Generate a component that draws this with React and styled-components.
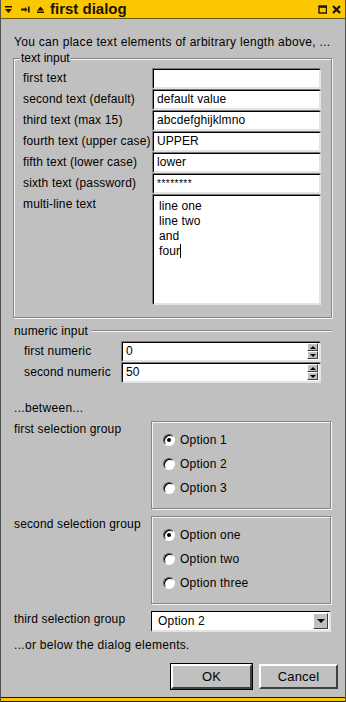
import React from 'react'
import styled, { createGlobalStyle } from 'styled-components'

const GlobalStyle = createGlobalStyle`
  html, body { margin: 0; padding: 0; background: #c0c0c0; }
  body {
    font-family: "Liberation Sans", Arial, sans-serif;
    font-size: 12px;
    color: #000;
  }
`

const Window = styled.div`
  width: 346px;
  height: 702px;
  box-sizing: border-box;
  display: flex;
  flex-direction: column;
  background: #c0c0c0;
  border-left: 1px solid #505050;
  border-right: 1px solid #505050;
  overflow: hidden;
`

const TitleBar = styled.div`
  height: 18px;
  flex: none;
  display: flex;
  align-items: center;
  background: #fbc800;
  border-bottom: 1px solid #6a5a10;
  padding: 0 3px 0 3px;
  color: #1a1400;
`

const TitleIcon = styled.svg`
  width: 9px;
  height: 9px;
  margin-right: ${p => p.$gap || 6}px;
  flex: none;
`

const TitleText = styled.div`
  font-family: "Liberation Sans", Arial, sans-serif;
  font-weight: bold;
  font-size: 15px;
  line-height: 18px;
  flex: 1;
`

const Body = styled.div`
  flex: 1;
  display: flex;
  flex-direction: column;
  padding: 0 13px;
`

const Note = styled.div`
  line-height: 14px;
  margin-top: ${p => p.$top || 0}px;
  letter-spacing: ${p => p.$ls || 0.15}px;
`

const Frame = styled.fieldset`
  margin: 3px 0 0 -1px;
  padding: 4px 10px 12px 9px;
  border: 1px solid #858585;
  box-shadow: inset 1px 1px 0 #f4f4f4, 1px 1px 0 #f4f4f4;
  min-width: 0;
`

const Legend = styled.legend`
  padding: 0 1px;
  margin-left: -3px;
  line-height: 13px;
  background: #c0c0c0;
`

const FieldGrid = styled.div`
  display: grid;
  grid-template-columns: 130px 1fr;
  row-gap: 1px;
`

const Label = styled.div`
  line-height: 14px;
  padding-top: 2px;
  letter-spacing: 0.15px;
  white-space: nowrap;
`

const Field = styled.div`
  position: relative;
  box-sizing: border-box;
  height: ${p => p.$h || 20}px;
  background: #fff;
  border-style: solid;
  border-width: 1px 2px 2px 1px;
  border-color: #000 #e4e4e4 #e4e4e4 #000;
  box-shadow: -1px -1px 0 #7a7a7a;
  padding: ${p => (p.$multi ? '3px 5px' : '0 3px')};
  line-height: ${p => (p.$multi ? '15px' : '17px')};
  font-size: ${p => (p.$small ? '10px' : '12px')};
  letter-spacing: ${p => (p.$small ? '0.5px' : '0.1px')};
  white-space: pre;
`

const Caret = styled.span`
  display: inline-block;
  width: 1px;
  height: 14px;
  background: #000;
  vertical-align: -3px;
`

const SectionHead = styled.div`
  display: flex;
  align-items: center;
  gap: 3px;
  margin-top: 6px;
  line-height: 14px;
  letter-spacing: 0.15px;
  &::after {
    content: "";
    flex: 1;
    height: 1px;
    background: #858585;
    border-bottom: 1px solid #f4f4f4;
  }
`

const NumGrid = styled.div`
  display: grid;
  grid-template-columns: 98px 1fr;
  row-gap: 1px;
  padding: 4px 11px 0 10px;
`

const Spinner = styled.div`
  position: absolute;
  right: 1px;
  top: 0;
  display: flex;
  flex-direction: column;
`

const SpinBtn = styled.div`
  width: 11px;
  height: 8px;
  box-sizing: border-box;
  background: #c0c0c0;
  border-style: solid;
  border-width: 1px;
  border-color: #fff #404040 #404040 #fff;
  display: flex;
  align-items: center;
  justify-content: center;
`

const Tri = styled.span`
  width: 0;
  height: 0;
  border-left: 3px solid transparent;
  border-right: 3px solid transparent;
  ${p => (p.$up ? 'border-bottom: 3px solid #000;' : 'border-top: 3px solid #000;')}
`

const SelectGrid = styled.div`
  display: grid;
  grid-template-columns: 137px 180px;
  row-gap: 7px;
  margin-top: ${p => p.$top || 0}px;
`

const GroupLabel = styled.div`
  line-height: 14px;
  padding-top: 1px;
  letter-spacing: 0.15px;
  white-space: nowrap;
`

const RadioBox = styled.div`
  box-sizing: border-box;
  height: 88px;
  border: 1px solid #858585;
  box-shadow: inset 1px 1px 0 #f4f4f4, 1px 1px 0 #f4f4f4;
  padding: 6px 0 0 11px;
  display: flex;
  flex-direction: column;
`

const RadioRow = styled.div`
  height: 24px;
  display: flex;
  align-items: center;
  gap: 5px;
  letter-spacing: 0.2px;
`

const RadioDot = styled.span`
  position: relative;
  width: 12px;
  height: 12px;
  box-sizing: border-box;
  border-radius: 50%;
  background: #fff;
  border: 1px solid;
  border-color: #505050 #fff #fff #505050;
  box-shadow: inset 1px 1px 0 #000;
  &::after {
    content: "";
    display: ${p => (p.$on ? 'block' : 'none')};
    position: absolute;
    left: 3px;
    top: 3px;
    width: 4px;
    height: 4px;
    border-radius: 50%;
    background: #000;
  }
`

const Combo = styled.div`
  position: relative;
  box-sizing: border-box;
  height: 21px;
  background: #fff;
  border-style: solid;
  border-width: 1px 2px 2px 1px;
  border-color: #000 #e4e4e4 #e4e4e4 #000;
  padding: 0 6px;
  line-height: 18px;
  letter-spacing: 0.2px;
`

const ComboBtn = styled.div`
  position: absolute;
  right: 1px;
  top: 1px;
  width: 15px;
  height: 16px;
  box-sizing: border-box;
  background: #c0c0c0;
  border: 1px solid;
  border-color: #fff #404040 #404040 #fff;
  display: flex;
  align-items: center;
  justify-content: center;
`

const ComboTri = styled.span`
  width: 0;
  height: 0;
  border-left: 4px solid transparent;
  border-right: 4px solid transparent;
  border-top: 4px solid #000;
`

const ButtonRow = styled.div`
  display: flex;
  justify-content: flex-end;
  gap: 7px;
  margin: 12px -6px 0 0;
`

const Button = styled.div`
  box-sizing: border-box;
  width: ${p => p.$w}px;
  height: 25px;
  display: flex;
  align-items: center;
  justify-content: center;
  background: #c0c0c0;
  border: 2px solid;
  border-color: #fff #404040 #404040 #fff;
  outline: ${p => (p.$default ? '1px solid #000' : 'none')};
  font-size: 13px;
  letter-spacing: 0.2px;
`

const BottomEdge = styled.div`
  flex: none;
  height: 3px;
  margin-top: auto;
  background: #fbc800;
  border-top: 1px solid #201a00;
  border-bottom: 1px solid #201a00;
`

const textRows = [
  ['first text', ''],
  ['second text (default)', 'default value'],
  ['third text (max 15)', 'abcdefghijklmno'],
  ['fourth text (upper case)', 'UPPER'],
  ['fifth text (lower case)', 'lower'],
  ['sixth text (password)', '********', true],
]

const groups = [
  ['first selection group', ['Option 1', 'Option 2', 'Option 3']],
  ['second selection group', ['Option one', 'Option two', 'Option three']],
]

function Spin() {
  return (
    <Spinner>
      <SpinBtn><Tri $up /></SpinBtn>
      <SpinBtn><Tri /></SpinBtn>
    </Spinner>
  )
}

export default function App() {
  return (
    <Window>
      <GlobalStyle />
      <TitleBar>
        <TitleIcon viewBox="0 0 9 9" $gap={8}>
          <rect x="1" y="1" width="7" height="1.5" fill="#1a1400" />
          <path d="M1 4 H8 L4.5 8 Z" fill="#1a1400" />
        </TitleIcon>
        <TitleIcon viewBox="0 0 9 9" $gap={6}>
          <path d="M0 3.6 H4 V2 L6.5 4.5 L4 7 V5.4 H0 Z" fill="#1a1400" />
          <rect x="7" y="1.5" width="1.6" height="6" fill="#1a1400" />
        </TitleIcon>
        <TitleIcon viewBox="0 0 9 9" $gap={5}>
          <path d="M4.5 1.5 L8 5.5 H1 Z" fill="#1a1400" />
          <rect x="1" y="6.5" width="7" height="1.5" fill="#1a1400" />
        </TitleIcon>
        <TitleText>first dialog</TitleText>
        <TitleIcon viewBox="0 0 9 9" $gap={5}>
          <rect x="1" y="1" width="7.5" height="7" fill="none" stroke="#1a1400" strokeWidth="1.4" />
          <rect x="1" y="1" width="7.5" height="1.8" fill="#1a1400" />
        </TitleIcon>
        <TitleIcon viewBox="0 0 9 9" $gap={1}>
          <path d="M1 1 L8 8 M8 1 L1 8" stroke="#1a1400" strokeWidth="2.2" />
        </TitleIcon>
      </TitleBar>

      <Body>
        <Note $top={16} $ls={0.3}>You can place text elements of arbitrary length above, ...</Note>

        <Frame>
          <Legend>text input</Legend>
          <FieldGrid>
            {textRows.map(([label, value, pw]) => (
              <React.Fragment key={label}>
                <Label>{label}</Label>
                <Field $small={pw}>{value}</Field>
              </React.Fragment>
            ))}
            <Label>multi-line text</Label>
            <Field $multi $h={110}>
              {'line one\nline two\nand\nfour'}<Caret />
            </Field>
          </FieldGrid>
        </Frame>

        <SectionHead>numeric input</SectionHead>
        <NumGrid>
          <Label>first numeric</Label>
          <Field>0<Spin /></Field>
          <Label>second numeric</Label>
          <Field>50<Spin /></Field>
        </NumGrid>

        <Note $top={18} $ls={0.3}>...between...</Note>

        <SelectGrid $top={6}>
          {groups.map(([label, opts]) => (
            <React.Fragment key={label}>
              <GroupLabel>{label}</GroupLabel>
              <RadioBox>
                {opts.map((o, i) => (
                  <RadioRow key={o}>
                    <RadioDot $on={i === 0} />
                    {o}
                  </RadioRow>
                ))}
              </RadioBox>
            </React.Fragment>
          ))}
          <GroupLabel>third selection group</GroupLabel>
          <Combo>
            Option 2
            <ComboBtn><ComboTri /></ComboBtn>
          </Combo>
        </SelectGrid>

        <Note $top={6} $ls={0.3}>...or below the dialog elements.</Note>

        <ButtonRow>
          <Button $w={81} $default>OK</Button>
          <Button $w={79}>Cancel</Button>
        </ButtonRow>
      </Body>
      <BottomEdge />
    </Window>
  )
}
